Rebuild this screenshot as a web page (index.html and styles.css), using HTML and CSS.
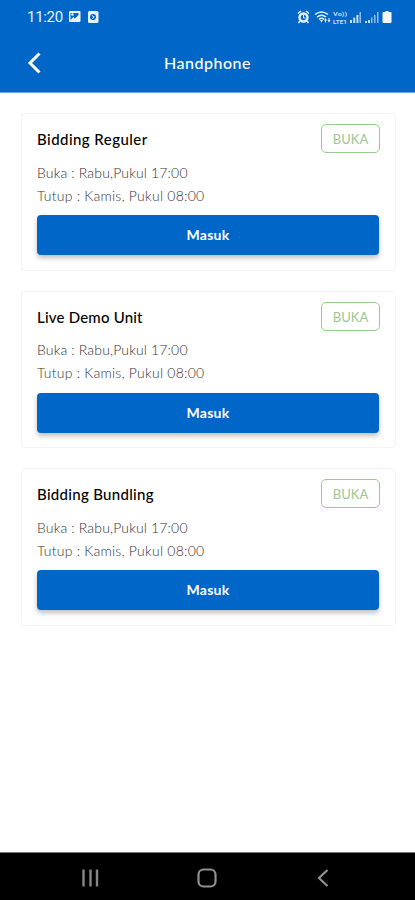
FILE: index.html
```
<!DOCTYPE html>
<html lang="id">
<head>
    <meta charset="UTF-8">
    <meta name="viewport" content="width=device-width, initial-scale=1.0">
    <title>Handphone</title>
    <link rel="stylesheet" href="styles.css">
</head>
<body>
    <header>
        <div class="status-bar">
            <span class="time">11:20</span>
            <svg class="left-icons" width="32" height="14" viewBox="0 0 32 14">
                <path fill="#e8f3ff" fill-rule="evenodd" d="M2 1h9.500q1 0 1 1v9q0 1-1 1H2q-1 0-1-1V2q0-1 1-1zM2.500 3v7l3-3 1.500 1.500L10.500 5V3z"/>
                <circle cx="4.500" cy="4.500" r="1.200" fill="#e8f3ff"/>
                <rect x="20" y="1" width="10.500" height="12" rx="1.500" fill="#e8f3ff"/>
                <circle cx="25" cy="7" r="3" fill="#0066c8"/>
                <path d="M23.800 5.500l2.500 1.500-2 1.500" stroke="#e8f3ff" fill="none"/>
            </svg>
            <svg class="right-icons" width="96" height="16" viewBox="0 0 96 16">
                <g fill="none" stroke="#e8f3ff">
                    <circle cx="6.500" cy="8.500" r="4" stroke-width="2.400"/>
                    <path d="M1 4.500l3-2.500M12 4.500l-3-2.500M3 12l-1.500 2M10 12l1.500 2" stroke-width="1.600"/>
                    <path d="M6.500 6v3h2" stroke-width="1"/>
                    <path d="M18 5.500q6.500-5 13 0M20 8q4.500-3.500 9 0M22 10.300q2.500-2 5 0" stroke-width="1.500"/>
                </g>
                <path fill="#e8f3ff" d="M23 11h3l-1.500 2.500zM27 11.500l1.500-2.500 1.500 2.500h-1v2h-1v-2zM30.500 11h1V9h1v2h1l-1.500 2.500z"/>
                <text class="volte" x="36" y="7" textLength="14" lengthAdjust="spacingAndGlyphs">Vo))</text>
                <text class="volte" x="36" y="14.500" textLength="14" lengthAdjust="spacingAndGlyphs">LTE1</text>
                <path fill="#c5def6" d="M53 11h2v3h-2zM56.200 8.500h2V14h-2zM59.400 6h2v8h-2z"/>
                <path fill="#8fbfea" d="M62.500 3H64v11h-1.500zM74 8.500h1.500V14H74zM77 6h1.500v8H77zM80 3h1.500v11H80z"/>
                <path fill="#c5def6" d="M68 12h2v2h-2zM71 11h2v3h-2z"/>
                <path fill="#f4f9ff" d="M86.500 3h2V2h3v1h2q1 0 1 1v9q0 1-1 1h-7q-1 0-1-1V4q0-1 1-1z"/>
            </svg>
        </div>
        <div class="title-bar">
            <svg class="back" width="14" height="22" viewBox="0 0 14 22">
                <path d="M12.500 1.500L3 11l9.500 9.500" fill="none" stroke="#fff" stroke-width="3"/>
            </svg>
            <h1>Handphone</h1>
        </div>
    </header>

    <main>
        <div class="card">
            <div class="card-top">
                <h2 class="reguler">Bidding Reguler</h2>
                <span class="badge">BUKA</span>
            </div>
            <p class="open">Buka : Rabu,Pukul 17:00</p>
            <p class="close">Tutup : Kamis, Pukul 08:00</p>
            <button type="button">Masuk</button>
        </div>
        <div class="card">
            <div class="card-top">
                <h2 class="live">Live Demo Unit</h2>
                <span class="badge">BUKA</span>
            </div>
            <p class="open">Buka : Rabu,Pukul 17:00</p>
            <p class="close">Tutup : Kamis, Pukul 08:00</p>
            <button type="button">Masuk</button>
        </div>
        <div class="card">
            <div class="card-top">
                <h2 class="bundling">Bidding Bundling</h2>
                <span class="badge">BUKA</span>
            </div>
            <p class="open">Buka : Rabu,Pukul 17:00</p>
            <p class="close">Tutup : Kamis, Pukul 08:00</p>
            <button type="button">Masuk</button>
        </div>
    </main>

    <nav>
        <svg width="18" height="18" viewBox="0 0 18 18">
            <path d="M2.500 0.500v17M9.500 0.500v17M16 0.500v17" stroke="#858585" stroke-width="2.400"/>
        </svg>
        <svg width="20" height="20" viewBox="0 0 20 20">
            <rect x="1.500" y="1.500" width="17" height="17" rx="5" fill="none" stroke="#909090" stroke-width="2.200"/>
        </svg>
        <svg width="12" height="18" viewBox="0 0 12 18">
            <path d="M10.500 1L2 9l8.500 8" fill="none" stroke="#909090" stroke-width="2.200"/>
        </svg>
    </nav>
</body>
</html>
```
FILE: styles.css
```
* {
    box-sizing: border-box;
}
body {
    font-family: Lato, sans-serif;
    margin: 0;
    height: 900px;
    display: flex;
    flex-direction: column;
    background-color: #fff;
    overflow: hidden;
}
header {
    height: 93px;
    background-color: #0066c8;
    border-bottom: 1px solid #69a5df;
    color: #fff;
}
.status-bar {
    display: flex;
    align-items: center;
    height: 34px;
    padding: 0 22px 0 27px;
}
.time {
    width: 41px;
    font-family: Roboto, sans-serif;
    font-size: 15px;
    letter-spacing: -0.3px;
    color: #e8f3ff;
}
.right-icons {
    margin-left: auto;
}
.volte {
    font-family: Roboto, sans-serif;
    font-size: 6px;
    font-weight: bold;
    fill: #c5def6;
}
.title-bar {
    display: grid;
    grid-template-columns: 50px 1fr 50px;
    align-items: center;
    height: 58px;
}
.back {
    margin-left: 27px;
}
h1 {
    margin: 0 0 2px;
    font-size: 16px;
    font-weight: 500;
    letter-spacing: 0.5px;
    text-align: center;
}
main {
    flex: 1;
    display: flex;
    flex-direction: column;
    gap: 20px;
    padding: 20px 19px 0 21px;
}
.card {
    height: 157.5px;
    padding: 10px 15px;
    border: 1px solid #f4f4f4;
    border-radius: 4px;
}
.card-top {
    display: flex;
    justify-content: space-between;
    height: 36.5px;
}
h2 {
    margin: 0;
    font-size: 15px;
    font-weight: 500;
    line-height: 30px;
    color: #000;
}
.reguler {
    letter-spacing: 0.45px;
}
.live {
    letter-spacing: 0.2px;
}
.bundling {
    letter-spacing: 0.3px;
}
.badge {
    width: 59px;
    height: 29px;
    border: 1px solid #93cf8a;
    border-radius: 5px;
    font-size: 13px;
    line-height: 28px;
    text-align: center;
    color: #9cc893;
}
p {
    margin: 0;
    font-size: 14px;
    font-weight: 300;
    line-height: 23px;
    color: #333;
}
.open {
    letter-spacing: 0.15px;
}
.close {
    letter-spacing: 0.25px;
}
button {
    display: block;
    width: 342px;
    height: 40px;
    margin-top: 8.5px;
    padding: 0 0 1px;
    border: 0;
    border-radius: 4px;
    background-color: #0066c8;
    box-shadow: 0 3px 5px rgba(0,0,0,0.25);
    font-family: Lato, sans-serif;
    font-size: 14px;
    font-weight: bold;
    letter-spacing: 0.3px;
    color: #fff;
}
nav {
    display: flex;
    align-items: center;
    justify-content: space-between;
    height: 48px;
    padding: 2px 86px 0 81px;
    border-top: 1px solid #777;
    background-color: #000;
}
nav svg:nth-child(2) {
    margin-right: 3px;
}
```
